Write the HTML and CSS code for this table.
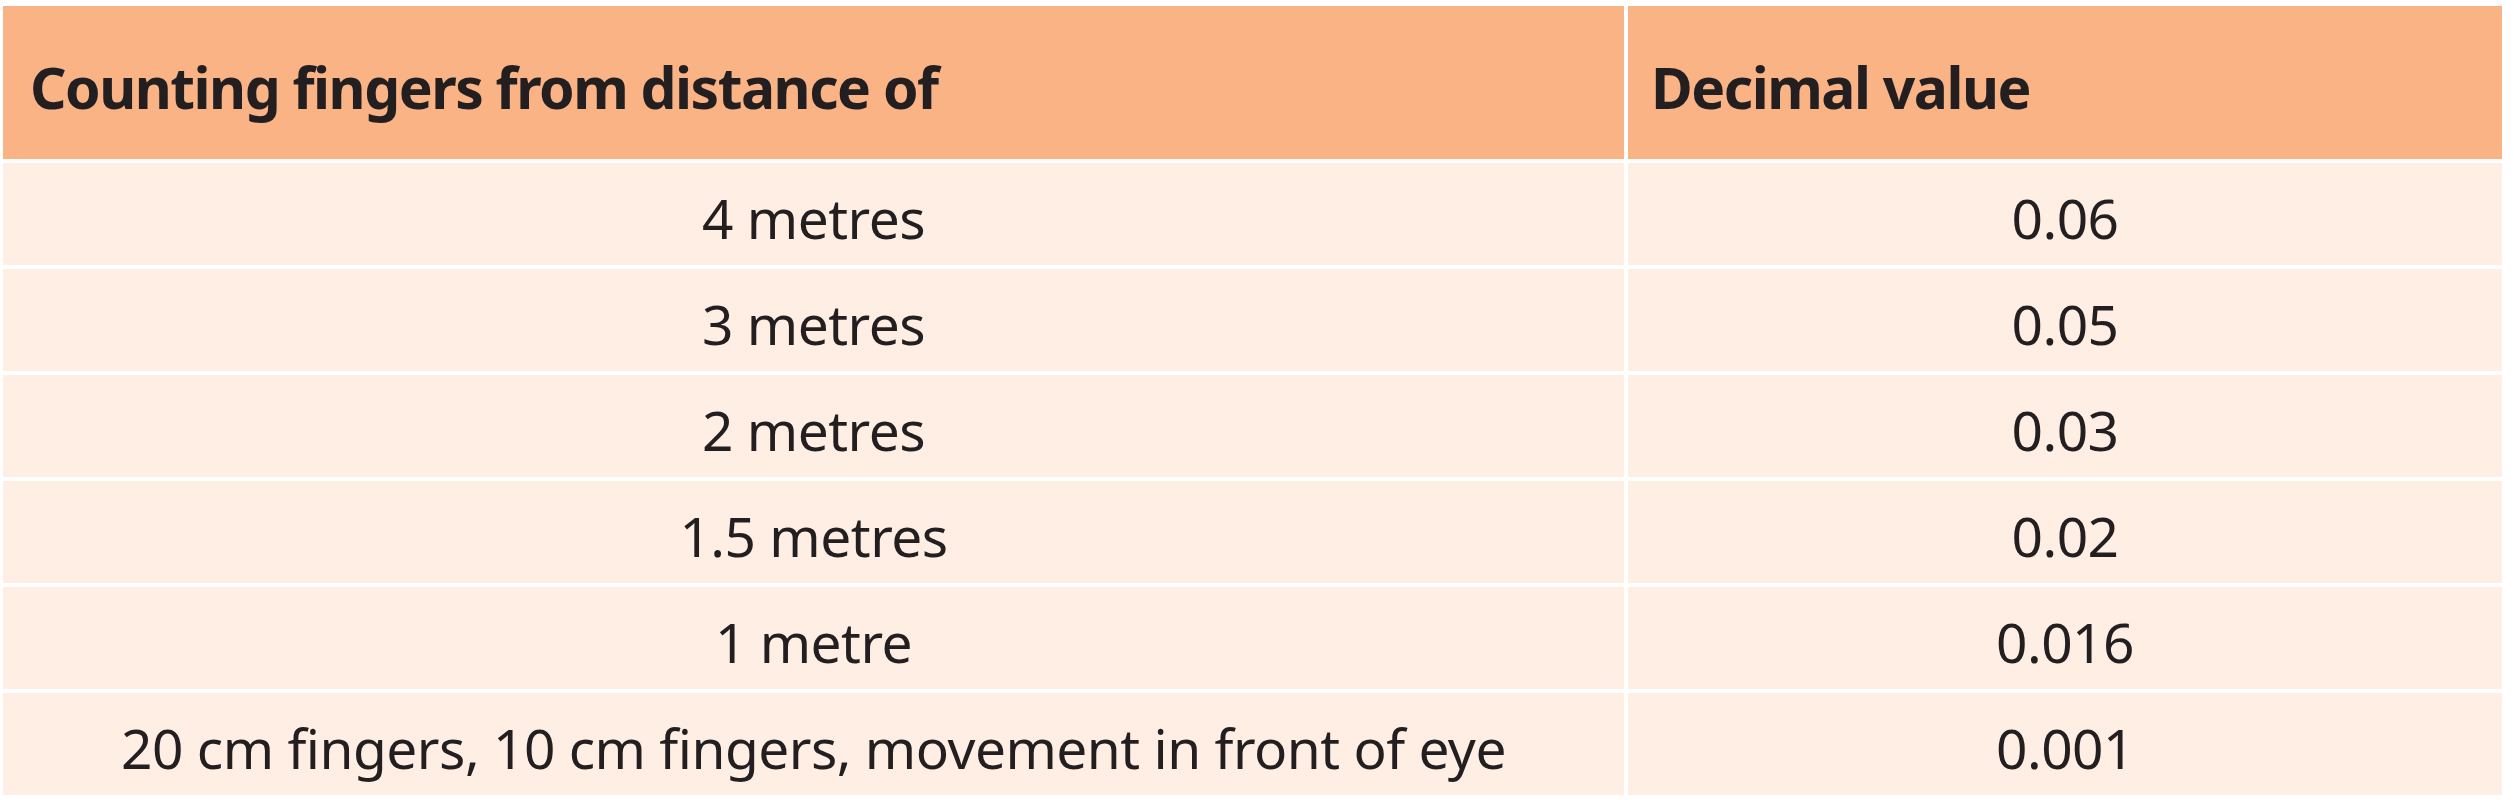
FILE: index.html
```html
<!DOCTYPE html>
<html lang="en">
<head>
<meta charset="utf-8">
<title>Counting fingers</title>
<link rel="stylesheet" href="styles.css">
</head>
<body>
<div class="table">
  <div class="cell head first">Counting fingers from distance of</div>
  <div class="cell head">Decimal value</div>
  <div class="cell">4 metres</div>
  <div class="cell">0.06</div>
  <div class="cell">3 metres</div>
  <div class="cell">0.05</div>
  <div class="cell">2 metres</div>
  <div class="cell">0.03</div>
  <div class="cell">1.5 metres</div>
  <div class="cell">0.02</div>
  <div class="cell">1 metre</div>
  <div class="cell">0.016</div>
  <div class="cell">20 cm fingers, 10 cm fingers, movement in front of eye</div>
  <div class="cell">0.001</div>
</div>
</body>
</html>
```
FILE: styles.css
```css
html, body {
  margin: 0;
  background: #ffffff;
}
body {
  padding: 6px 0 0 3px;
  font-family: "Noto Sans", "Open Sans", sans-serif;
  font-stretch: semi-condensed;
  color: #231f20;
}
.table {
  display: grid;
  grid-template-columns: 1621px 874px;
  grid-template-rows: 153px repeat(6, 102px);
  column-gap: 4px;
  row-gap: 4px;
  width: 2499px;
}
.cell {
  background: #feeee3;
  display: flex;
  align-items: center;
  justify-content: center;
  font-size: 55px;
  letter-spacing: -0.5px;
  padding-top: 6px;
  box-sizing: border-box;
  white-space: nowrap;
}
.cell.head {
  background: #fab385;
  justify-content: flex-start;
  font-weight: 700;
  font-size: 57px;
  letter-spacing: -1.5px;
  padding-left: 23px;
  padding-top: 8px;
}
.cell.head.first {
  padding-left: 27px;
}
```
